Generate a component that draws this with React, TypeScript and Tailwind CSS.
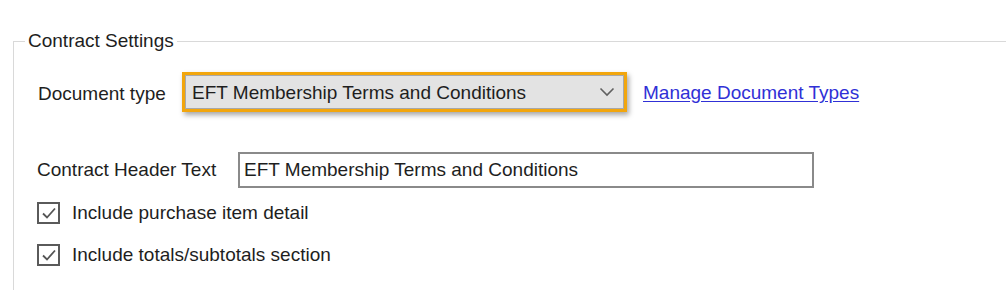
import React from "react"

function CheckRow({ label, className }: { label: string; className?: string }) {
  return (
    <div className={`flex items-center pl-[23px] ${className ?? ""}`}>
      <span className="flex h-[22px] w-[23px] items-center justify-center border-2 border-[#5a5a5a] bg-white">
        <svg width="16" height="14" viewBox="0 0 16 14" fill="none">
          <path d="M2 7.5 L6 11.5 L14 2.5" stroke="#555" strokeWidth="1.8" />
        </svg>
      </span>
      <span className="ml-[12px] pt-[1px]">{label}</span>
    </div>
  )
}

export default function App() {
  return (
    <div
      className="h-[290px] w-[1006px] overflow-hidden bg-white text-[19px] leading-[22px] text-[#1e1e1e]"
      style={{ fontFamily: '"Liberation Sans", Arial, sans-serif' }}
    >
      <fieldset className="ml-[13px] mt-[30px] h-[300px] border-l border-t border-[#d9d9d9] p-0">
        <legend className="ml-[11px] px-[3px]">Contract Settings</legend>

        {/* Document type */}
        <div className="mt-[20px] flex items-center pl-[24px]">
          <span className="w-[144px] pt-[4px]">Document type</span>
          <div className="flex h-[40px] w-[445px] items-center border-[3px] border-[#f2a60d] shadow-[2px_3px_5px_rgba(0,0,0,0.35)]">
            <div className="flex h-full w-full items-center justify-between border border-[#a8a8a8] bg-[#e3e3e3] pl-[6px] pr-[8px]">
              <span className="pt-[2px]">EFT Membership Terms and Conditions</span>
              <svg width="16" height="10" viewBox="0 0 16 10" fill="none">
                <path d="M1.5 1.5 L8 8 L14.5 1.5" stroke="#606060" strokeWidth="1.6" />
              </svg>
            </div>
          </div>
          <a className="ml-[16px] pt-[2px] text-[#3030d6] underline underline-offset-2" href="#">
            Manage Document Types
          </a>
        </div>

        {/* Contract header text */}
        <div className="mt-[40px] flex items-center pl-[23px]">
          <span className="w-[201px]">Contract Header Text</span>
          <div className="flex h-[36px] w-[576px] items-center border-2 border-[#8a8a8a] bg-white pl-[4px]">
            EFT Membership Terms and Conditions
          </div>
        </div>

        <CheckRow className="mt-[13px]" label="Include purchase item detail" />
        <CheckRow className="mt-[19px]" label="Include totals/subtotals section" />
      </fieldset>
    </div>
  )
}
